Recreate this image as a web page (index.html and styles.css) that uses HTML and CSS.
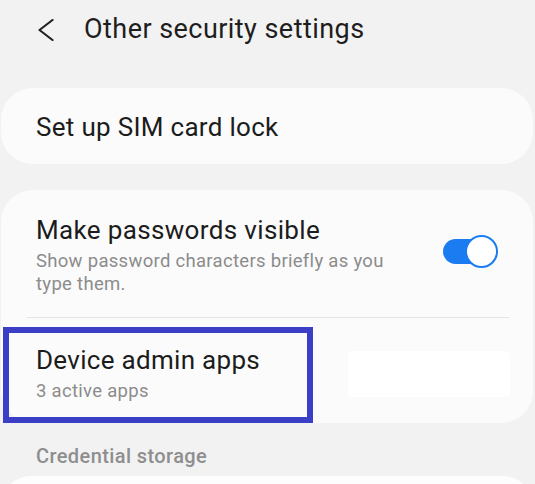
FILE: index.html
```html
<!DOCTYPE html>
<html lang="en">
<head>
<meta charset="utf-8">
<title>Other security settings</title>
<link rel="stylesheet" href="styles.css">
</head>
<body>
<header class="topbar">
  <svg class="back" width="16" height="22" viewBox="0 0 16 22" aria-hidden="true">
    <polyline points="14.5,1 1.5,11 14.5,21" fill="none" stroke="#222" stroke-width="2.2" stroke-linecap="round" stroke-linejoin="round"/>
  </svg>
  <h1 class="title">Other security settings</h1>
</header>

<section class="card card-single">
  <div class="item-title">Set up SIM card lock</div>
</section>

<section class="card card-group">
  <div class="row row-toggle">
    <div class="row-text">
      <div class="item-title">Make passwords visible</div>
      <div class="item-sub">Show password characters briefly as you type them.</div>
    </div>
    <div class="switch"><span class="knob"></span></div>
  </div>
  <div class="divider"></div>
  <div class="row row-admin">
    <div class="row-text">
      <div class="item-title">Device admin apps</div>
      <div class="item-sub">3 active apps</div>
    </div>
    <div class="patch"></div>
    <div class="highlight"></div>
  </div>
</section>

<div class="section-label">Credential storage</div>

<section class="card card-bottom"></section>
</body>
</html>
```
FILE: styles.css
```css
html, body {
  margin: 0;
  padding: 0;
}
body {
  background: #f2f2f2;
  font-family: Roboto, "Noto Sans", "Liberation Sans", sans-serif;
  color: #1c1c1c;
  width: 535px;
  height: 484px;
  overflow: hidden;
}
.topbar {
  height: 58px;
  display: flex;
  align-items: center;
  padding-left: 38px;
}
.back {
  display: block;
  margin-top: 1px;
}
.title {
  margin: 0 0 0 30px;
  font-size: 27px;
  font-weight: 400;
  color: #1e1e1e;
  letter-spacing: 0.45px;
}
.card {
  background: #fbfbfb;
  margin: 0 2px 0 1px;
  border-radius: 32px;
}
.card-single {
  margin-top: 30px;
  height: 76px;
  display: flex;
  align-items: center;
  padding-left: 35px;
  box-sizing: border-box;
}
.card-single .item-title {
  margin-top: 2px;
  letter-spacing: 0.3px;
}
.card-group {
  margin-top: 26px;
}
.item-title {
  font-size: 26px;
  line-height: 30px;
  color: #1c1c1c;
  letter-spacing: 0.35px;
}
.item-sub {
  font-size: 18.5px;
  line-height: 23px;
  color: #8c8c8c;
  margin-top: 5px;
  letter-spacing: 0.3px;
}
.row {
  display: flex;
  align-items: center;
  padding-left: 35px;
  position: relative;
}
.row-toggle {
  padding-top: 25px;
  padding-bottom: 21px;
  padding-right: 36px;
}
.row-toggle .row-text {
  width: 375px;
}
.switch {
  margin-left: auto;
  margin-top: -8px;
  width: 54px;
  height: 25px;
  background: #1b7cf2;
  border-radius: 13px;
  position: relative;
}
.knob {
  position: absolute;
  right: -1px;
  top: -4px;
  width: 29px;
  height: 29px;
  border-radius: 50%;
  background: #ffffff;
  border: 2px solid #1b7cf2;
}
.divider {
  height: 1px;
  background: #e4e4e4;
  margin: 0 24px 0 26px;
}
.row-admin {
  padding-top: 27px;
  padding-bottom: 20px;
  padding-right: 23px;
}
.row-admin .item-title {
  letter-spacing: 0.3px;
}
.patch {
  margin-left: auto;
  width: 162px;
  height: 46px;
  background: #ffffff;
  border-radius: 4px;
}
.highlight {
  position: absolute;
  left: 2px;
  top: 9px;
  width: 298px;
  height: 84px;
  border: 6px solid #3b3fc5;
}
.section-label {
  font-size: 20px;
  font-weight: 500;
  line-height: 24px;
  color: #8e8e8e;
  padding-left: 36px;
  margin-top: 21px;
  margin-bottom: 8px;
  letter-spacing: 0.4px;
}
.card-bottom {
  height: 60px;
  background: #fdfdfd;
}
```
